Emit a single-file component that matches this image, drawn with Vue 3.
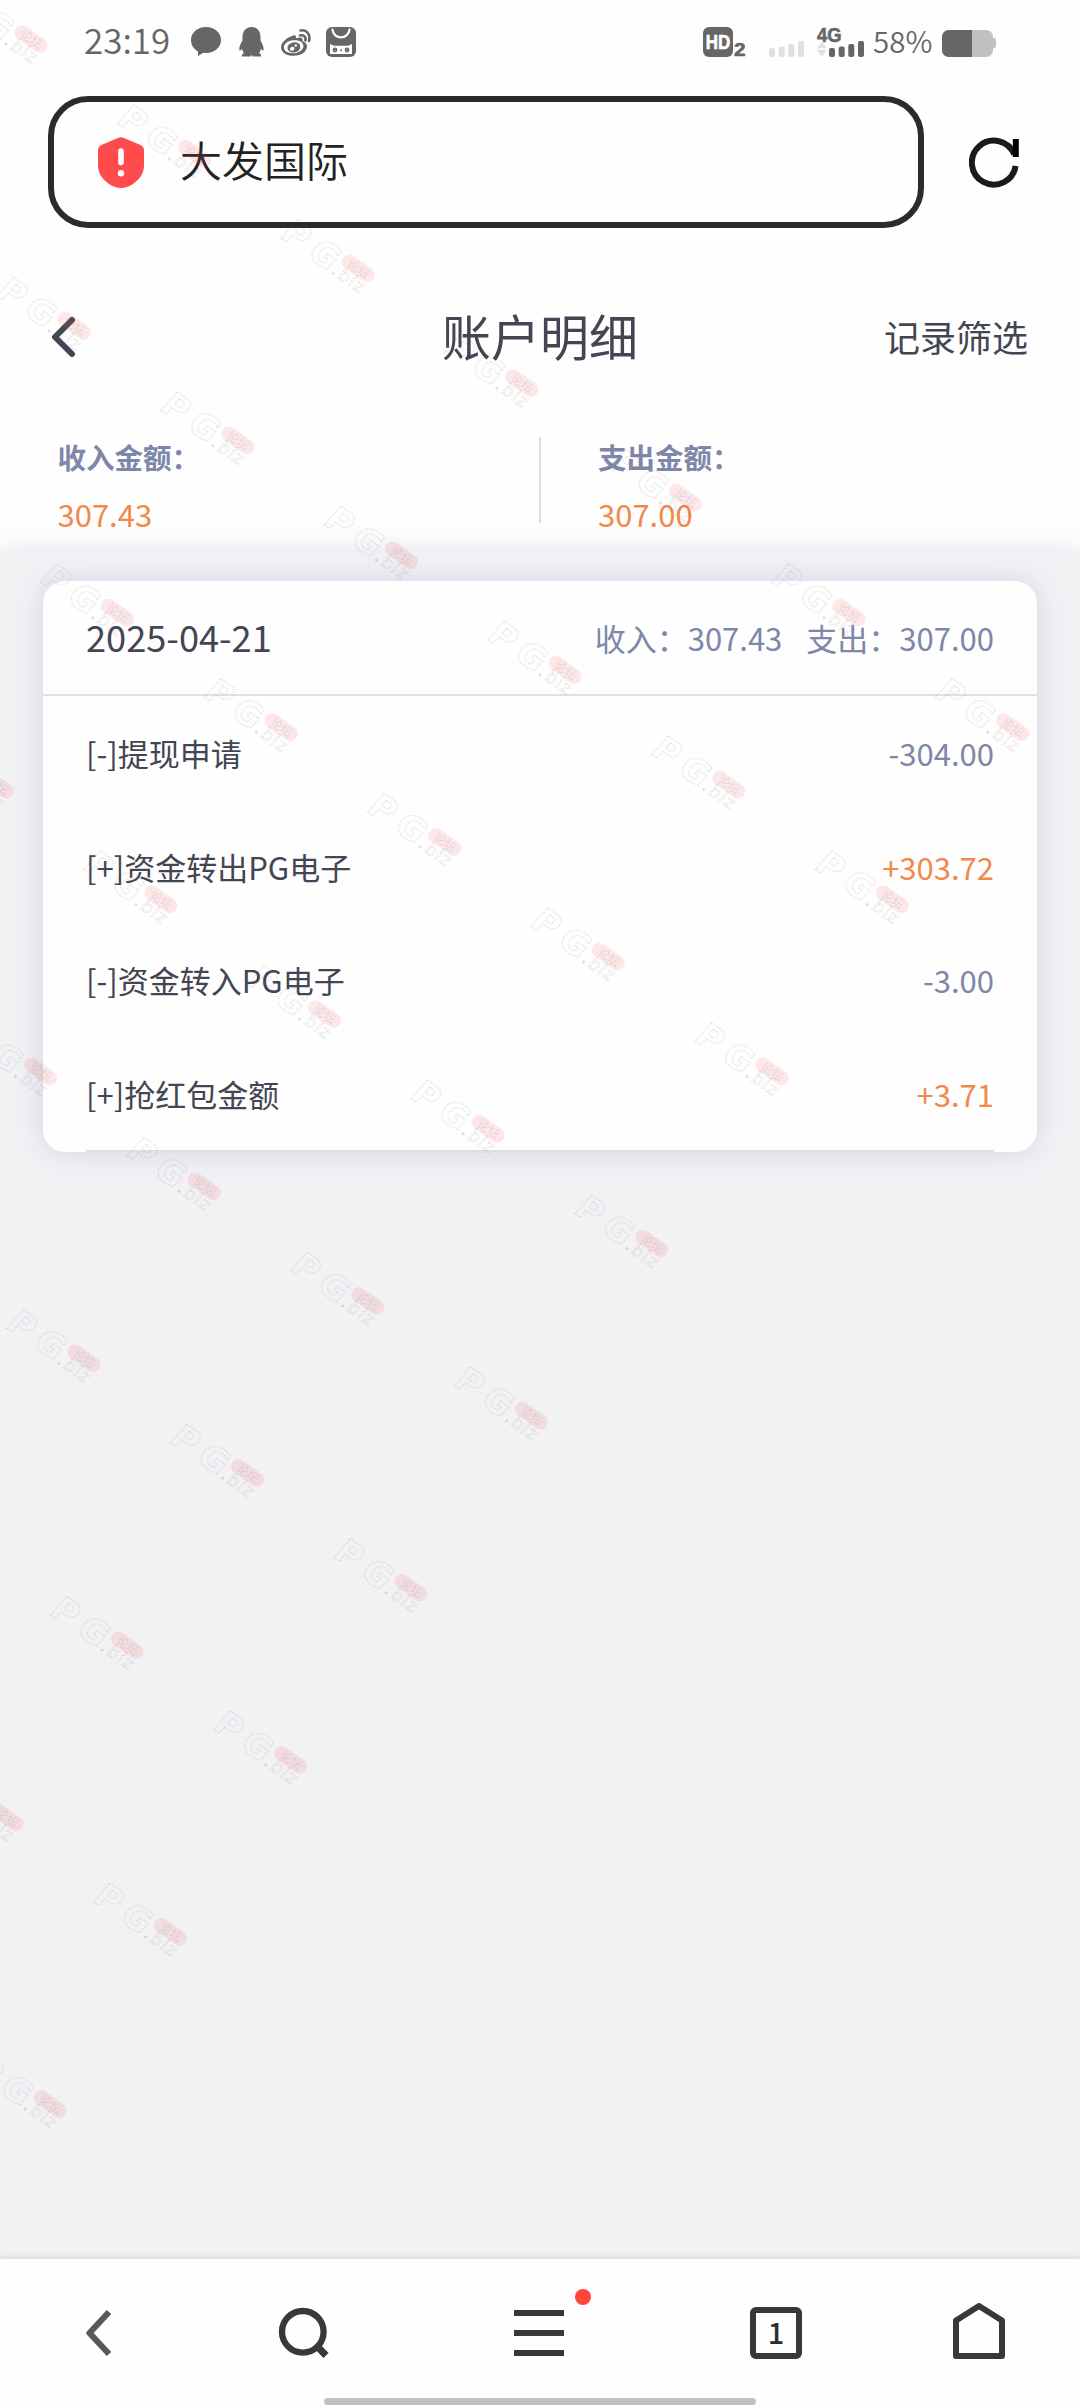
<script setup>
const totals = [
  { label: '收入金额：', value: '307.43' },
  { label: '支出金额：', value: '307.00' }
]

const records = [
  { name: '[-]提现申请', amount: '-304.00' },
  { name: '[+]资金转出PG电子', amount: '+303.72' },
  { name: '[-]资金转入PG电子', amount: '-3.00' },
  { name: '[+]抢红包金额', amount: '+3.71' }
]

// Diagonal watermark grid: first column index for each row, last index is always 4
const firstColumns = { '-1': -2, 0: -1, 1: 0, 2: 0, 3: 1, 4: 2, 5: 3, 6: 3, 7: 4 }
const marks = []
for (let row = -1; row <= 7; row++) {
  for (let col = firstColumns[row]; col <= 4; col++) {
    marks.push({
      id: row + ':' + col,
      x: 238.3 + 163.6 * col - 120.3 * row,
      y: 440.8 + 114.7 * col + 172.1 * row
    })
  }
}
</script>

<template>
  <div class="screen">
    <header class="status">
      <span class="clock">23:19</span>
      <svg class="notices" width="166" height="32" viewBox="190 26 166 32">
        <path d="M206 27c8.600 0 15 5.600 15 13s-6.400 13-15 13c-1 0-2 0-2.800-.2L198 56v-4.600c-4.300-2.300-7-6.400-7-11.400 0-7.400 6.400-13 15-13z" />
        <path d="M251.500 27c5.500 0 9 4.300 9 10v3.500c1.800 3 3.100 6.200 3.100 8.500 0 2-.9 2.300-2.600-.2-.4 1.600-1 2.800-2 4.100 1.500.6 2.200 1.500 2.200 3.700h-8.700v-1h-2v1h-8.600c0-2.200.6-3.100 2.100-3.700-1-1.300-1.700-2.500-2.100-4.100-1.700 2.500-2.600 2.200-2.600.2 0-2.300 1.300-5.500 3.200-8.500V37c0-5.700 3.500-10 9-10z" />
        <path fill-rule="evenodd" d="M292 36c2.800-1.500 4.600-.3 3.900 2.300 4.800-1.800 7.700-.6 6.600 3 2.600.8 4.500 2.500 4.500 5.200 0 5-5.800 9.300-13.400 9.300-7.300 0-12.600-3.400-12.600-8.600 0-4 4.600-9 11-11.200zm1.500 4.300c-6 .5-10 3.800-9.600 7.500.3 3.600 4.700 5.900 10.200 5.400 5.700-.6 9.700-3.900 9.300-7.500-.4-3.700-4.500-5.900-9.900-5.400z" />
        <path fill-rule="evenodd" d="M293 42.500c4-.8 7.400 1.300 7.300 4.500-.1 3-3.200 5.500-6.800 5.500s-6.200-2.200-6-5c.1-2.400 2.400-4.500 5.500-5zm-1.200 4.200c-2.500.8-2.500 4 .2 4 2.900-.1 3.800-4.700-.2-4z" />
        <circle cx="295.800" cy="45.500" r="1.200" fill="#fff" />
        <path d="M300 35.500c3.600-1 6.200 1.500 5.400 5M300.500 30.500c6-1.400 10.300 4 8.500 10.300" fill="none" stroke="#666" stroke-width="2.600" stroke-linecap="round" />
        <rect x="326" y="27" width="30" height="30" rx="6" />
        <path d="M332.500 29.500c.8 10.500 16 10.500 17 0" fill="none" stroke="#fff" stroke-width="2.200" stroke-linecap="round" />
        <path d="M330 44l4 1.800h14l4-1.800v10h-22z" fill="#fff" />
        <g><circle cx="335" cy="50" r="2.400" /><circle cx="347" cy="50" r="2.400" /><circle cx="341" cy="50.300" r="1" /></g>
        <path d="M335 48.500v3M347 48.500v3" stroke="#aaa" stroke-width=".8" />
      </svg>
      <svg class="signals" width="162" height="34" viewBox="702 26 162 34">
        <rect x="703" y="27" width="30" height="30" rx="6" />
        <text x="705.800" y="49" textLength="24.500" lengthAdjust="spacingAndGlyphs" class="badge hd">HD</text>
        <text x="734" y="56" class="badge" textLength="11.500" lengthAdjust="spacingAndGlyphs">2</text>
        <g fill="#e0e0e0">
          <rect x="769" y="48" width="6" height="9" rx="2" /><rect x="778.700" y="46.500" width="6" height="10.500" rx="2" /><rect x="788.300" y="44" width="6" height="13" rx="2" /><rect x="798" y="41" width="6" height="16" rx="2" />
          <path d="M821.800 42l5 6.300h-10zM821.800 56.500l5-6.500h-10z" />
        </g>
        <text x="817" y="42" class="badge net" textLength="24.500" lengthAdjust="spacingAndGlyphs">4G</text>
        <rect x="829" y="48" width="6" height="9" rx="2" /><rect x="838.700" y="46.500" width="6" height="10.500" rx="2" /><rect x="848.300" y="44" width="6" height="13" rx="2" /><rect x="858" y="41" width="6" height="16" rx="2" />
      </svg>
      <span class="percent">58%</span>
      <svg class="battery" width="54" height="28" viewBox="942 30 54 28">
        <path d="M949 30h37c4 0 7 3 7 7v1h1q2 0 2 2v6q0 2-2 2h-1v2c0 4-3 7-7 7h-37c-4 0-7-3-7-7V37c0-4 3-7 7-7z" fill="#c1c1c1" />
        <path d="M949 30h23v27h-23c-4 0-7-3-7-7V37c0-4 3-7 7-7z" />
      </svg>
    </header>

    <div class="address">
      <div class="url">
        <svg width="46" height="51" viewBox="0 0 46 51">
          <path d="M20 1q3-1.300 6 0l16 6.700q4 1.800 4 5.500V28c0 8-4 14-11 19-8 5.300-16 5.300-24 0C4 42 0 36 0 28V13.200q0-3.700 4-5.500z" fill="#ff4b4b" />
          <path d="M23 14v11.500" stroke="#fff" stroke-width="5.600" stroke-linecap="round" />
          <circle cx="23" cy="36.200" r="3.200" fill="#fff" />
        </svg>
        <span>大发国际</span>
      </div>
      <svg class="reload" width="52" height="52" viewBox="0 0 52 52" fill="none" stroke="#1a1a1a" stroke-width="6">
        <path d="M46.600 30A22 22 0 1 1 45.300 18.500" />
        <path d="M46.800 3v18" stroke="#000" />
      </svg>
    </div>

    <nav class="titlebar">
      <svg width="26" height="44" viewBox="0 0 26 44"><path d="M22 5L5 22l17 17" fill="none" stroke="#434652" stroke-width="6" stroke-linecap="round" stroke-linejoin="round" /></svg>
      <h1>账户明细</h1>
      <span class="filter">记录筛选</span>
    </nav>

    <section class="totals">
      <div v-for="t in totals" :key="t.label" class="total">
        <b>{{ t.label }}</b>
        <span>{{ t.value }}</span>
      </div>
    </section>

    <main class="list">
      <article class="card">
        <div class="day">
          <span class="date">2025-04-21</span>
          <span class="sum">收入：307.43</span>
          <span class="sum">支出：307.00</span>
        </div>
        <div class="rows">
          <div v-for="r in records" :key="r.name" class="row">
            <span>{{ r.name }}</span>
            <span class="amount" :class="{ plus: r.amount[0] === '+' }">{{ r.amount }}</span>
          </div>
        </div>
      </article>
    </main>

    <footer class="toolbar">
      <div class="tool back">
        <svg width="30" height="52" viewBox="0 0 30 52"><path d="M25 5L5.500 26 25 47" fill="none" stroke="#595959" stroke-width="6.200" stroke-linejoin="round" /></svg>
      </div>
      <div class="tool search">
        <svg width="52" height="52" viewBox="0 0 52 52" fill="none" stroke="#383838"><circle cx="24.800" cy="24.800" r="20.800" stroke-width="6.300" /><path d="M38.500 38.500l9.500 10" stroke-width="7" /></svg>
      </div>
      <div class="tool menu"><i></i><i></i><i></i><b class="dot"></b></div>
      <div class="tool tabs">1</div>
      <div class="tool home">
        <svg width="52" height="56" viewBox="0 0 52 56"><path d="M3 17.500L26 3l23 14.500V53H3z" fill="none" stroke="#383838" stroke-width="6" stroke-linejoin="round" /></svg>
      </div>
      <div class="indicator"></div>
    </footer>

    <svg class="watermark" width="1080" height="2408" viewBox="0 0 1080 2408">
      <g v-for="m in marks" :key="m.id" :transform="`translate(${m.x} ${m.y}) rotate(35)`">
        <g transform="translate(0 20) skewX(-6)">
          <text x="-84 -51" y="-.5" class="wm-pg">PG</text>
          <text x="-13.500" y="0" class="wm-biz" textLength="28">biz</text>
        </g>
        <circle cx="-18" cy="18.500" r="1.500" class="wm-dot" />
        <rect x="-19" y="-7.500" width="37" height="15" rx="7.500" class="wm-pill" />
        <text x="-12" y="4.500" class="wm-forum">论坛</text>
      </g>
    </svg>
  </div>
</template>

<style>
body {
  margin: 0;
}
</style>

<style scoped>
.screen {
  position: relative;
  display: flex;
  flex-direction: column;
  width: 1080px;
  height: 2408px;
  overflow: hidden;
  background: #fefefe;
  color: #434652;
  font-family: "Noto Sans CJK SC", "Noto Sans", sans-serif;
}
svg {
  display: block;
  flex: none;
}
.status {
  display: flex;
  align-items: flex-start;
  height: 96px;
  padding: 0 84px;
  box-sizing: border-box;
  color: #666;
  fill: #666;
}
.clock {
  width: 106px;
  margin-top: 21px;
  font-size: 35px;
  line-height: 36px;
  font-weight: 350;
}
.notices {
  margin-top: 26px;
}
.signals {
  margin: 26px 0 0 346px;
}
.percent {
  width: 68px;
  margin: 22px 0 0 9px;
  font-size: 29.500px;
  line-height: 36px;
  font-weight: 350;
}
.battery {
  margin: 30px 0 0 1px;
}
.badge {
  font: 700 18px "Liberation Sans", sans-serif;
  stroke: #666;
  stroke-width: 0.6;
}
.hd {
  font-size: 19.500px;
  fill: #fff;
  stroke: #fff;
}
.net {
  font-size: 21px;
}
.address {
  display: flex;
  align-items: center;
  height: 132px;
  padding-left: 48px;
}
.url {
  display: flex;
  align-items: center;
  gap: 36px;
  width: 876px;
  height: 132px;
  padding-left: 44px;
  box-sizing: border-box;
  border: 6px solid #2b2b2b;
  border-radius: 40px;
  color: #222;
  font-size: 42px;
  font-weight: 350;
}
.url span {
  margin-top: -7px;
}
.reload {
  margin-left: 45px;
}
.titlebar {
  display: flex;
  align-items: center;
  height: 130px;
  margin-top: 44px;
  padding: 0 52px 0 50px;
}
.titlebar h1 {
  flex: 1;
  margin: -5px 0 0 120px;
  text-align: center;
  font-size: 49px;
  font-weight: 400;
}
.filter {
  margin-top: -3px;
  font-size: 36px;
}
.totals {
  display: flex;
  height: 150px;
}
.total {
  position: relative;
  display: flex;
  flex-direction: column;
  width: 540px;
  padding: 33px 0 0 57.500px;
  box-sizing: border-box;
}
.total + .total {
  padding-left: 58px;
}
.total + .total::before {
  content: "";
  position: absolute;
  left: -1px;
  top: 35px;
  width: 2px;
  height: 86px;
  background: #ddd;
}
.total b {
  height: 44px;
  color: #7e87a9;
  font-size: 28.500px;
  line-height: 44px;
}
.total span {
  margin-top: 13px;
  color: #f0894a;
  font-size: 31px;
  line-height: 44px;
}
.list {
  flex: 1;
  padding: 29px 43px 0;
  background: #f2f2f5;
  box-shadow: 0 0 29px rgba(120, 132, 172, 0.24);
}
.card {
  height: 571px;
  border-radius: 22px;
  background: #fefefe;
  box-shadow: 0 0 29px rgba(120, 132, 172, 0.26);
}
.day {
  display: flex;
  align-items: center;
  height: 115px;
  padding: 0 43px;
  box-sizing: border-box;
  border-bottom: 2px solid #e0e0e0;
}
.date {
  flex: 1;
  margin-top: -4px;
  font-size: 36.200px;
}
.sum {
  margin: -1px 0 0 24px;
  color: #7e87a9;
  font-size: 31px;
}
.rows {
  margin: 0 43px;
  border-bottom: 2px solid #dfdfdf;
}
.row {
  display: flex;
  align-items: center;
  justify-content: space-between;
  height: 113.500px;
  font-size: 31px;
}
.amount {
  color: #7e87a9;
}
.amount.plus {
  color: #f0894a;
}
.toolbar {
  position: relative;
  display: flex;
  height: 149px;
  background: #fefefe;
  box-shadow: 0 0 9px rgba(0, 0, 0, 0.16);
}
.tool {
  flex: none;
  box-sizing: border-box;
}
.back {
  margin: 48px 0 0 84px;
}
.search {
  margin: 48px 0 0 163.500px;
}
.menu {
  position: relative;
  display: flex;
  flex-direction: column;
  gap: 14px;
  width: 50px;
  margin: 51px 0 0 184.500px;
}
.menu i {
  height: 6px;
  background: #383838;
}
.dot {
  position: absolute;
  left: 61px;
  top: -21px;
  width: 16px;
  height: 16px;
  border-radius: 50%;
  background: #ff463c;
}
.tabs {
  width: 52px;
  height: 52px;
  margin: 48px 0 0 186px;
  border: 6px solid #383838;
  border-radius: 6px;
  color: #2c2c2c;
  text-align: center;
  font-size: 29px;
  font-weight: 500;
  line-height: 37px;
}
.home {
  margin: 44px 0 0 151px;
}
.indicator {
  position: absolute;
  left: 324px;
  top: 139px;
  width: 432px;
  height: 7px;
  border-radius: 4px;
  background: #c1c1c1;
}
.watermark {
  position: absolute;
  left: 0;
  top: 0;
  pointer-events: none;
}
.wm-pg {
  font: 700 34px "DejaVu Sans", sans-serif;
  fill: rgba(90, 80, 90, 0.02);
  stroke: rgba(90, 80, 90, 0.2);
  stroke-width: 1.600;
  stroke-dasharray: 1 1.400;
}
.wm-dot {
  fill: rgba(90, 80, 90, 0.18);
}
.wm-biz {
  font: 400 18px "DejaVu Sans", sans-serif;
  fill: none;
  stroke: rgba(90, 80, 90, 0.17);
  stroke-width: 0.900;
  stroke-dasharray: 2 1;
}
.wm-pill {
  fill: rgba(245, 50, 60, 0.115);
}
.wm-forum {
  font: 400 12px "Noto Sans CJK SC", sans-serif;
  fill: rgba(110, 140, 120, 0.2);
}
</style>
